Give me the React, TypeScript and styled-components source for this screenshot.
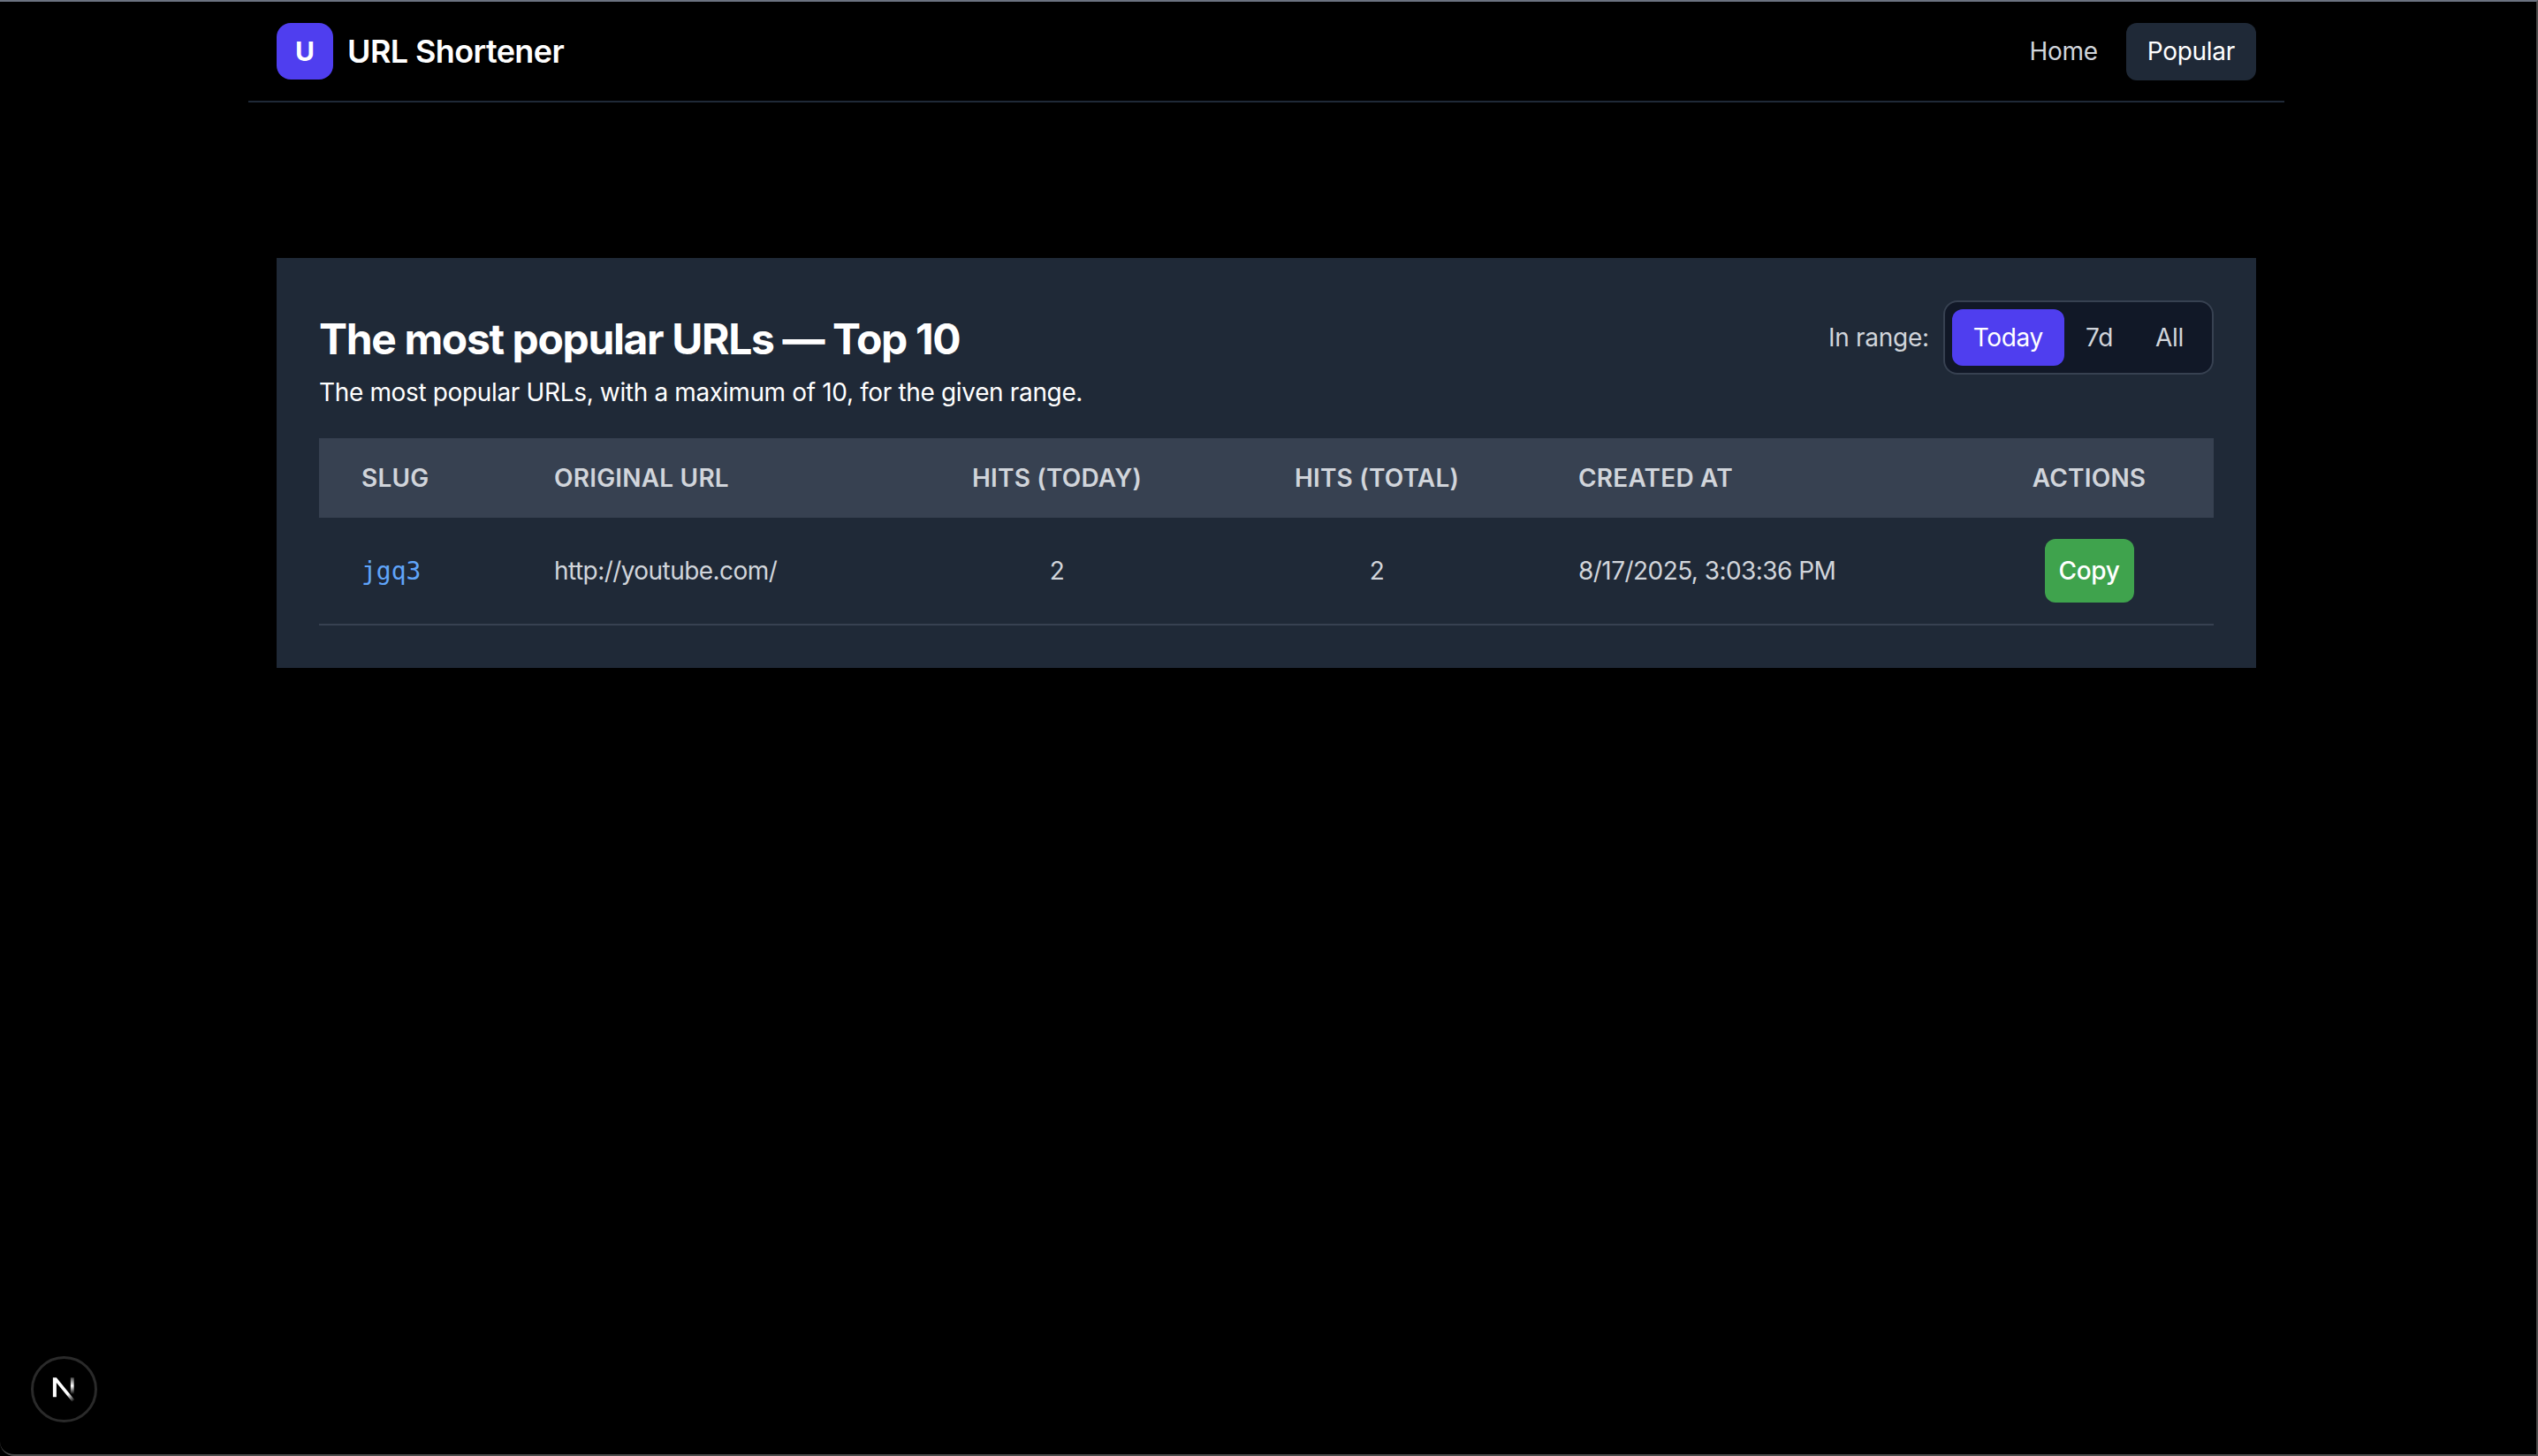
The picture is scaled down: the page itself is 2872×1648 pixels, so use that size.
import styled, { createGlobalStyle } from 'styled-components';

const GlobalStyle = createGlobalStyle`
  html, body {
    margin: 0;
    background: #000;
    color: #fff;
    font-family: Inter, "Noto Sans", sans-serif;
  }
  * {
    box-sizing: border-box;
  }
`;

const COLUMNS = [
  { label: 'Slug', width: 218, center: false },
  { label: 'Original URL', width: 435, center: false },
  { label: 'Hits (Today)', width: 364, center: true },
  { label: 'Hits (Total)', width: 360, center: true },
  { label: 'Created At', width: 485, center: false },
  { label: 'Actions', width: 282, center: true },
];

function NextMark() {
  return (
    <svg width="40" height="40" viewBox="1 0 32 32" fill="none">
      <defs>
        <linearGradient id="diag" x1="6" y1="4" x2="25" y2="27" gradientUnits="userSpaceOnUse">
          <stop offset="0.72" stopColor="#fff" />
          <stop offset="1" stopColor="#fff" stopOpacity="0" />
        </linearGradient>
        <linearGradient id="stem" x1="23" y1="5" x2="23" y2="20" gradientUnits="userSpaceOnUse">
          <stop offset="0" stopColor="#fff" stopOpacity="0.3" />
          <stop offset="0.5" stopColor="#fff" />
          <stop offset="1" stopColor="#fff" stopOpacity="0" />
        </linearGradient>
      </defs>
      <path d="M6.500 5h3.200L26 25l-2.200 1.700L9.700 9.500V22.500H6.500z" fill="url(#diag)" />
      <rect x="22.500" y="5" width="3" height="15" fill="url(#stem)" />
    </svg>
  );
}

export default function App() {
  return (
    <Page>
      <GlobalStyle />
      <Nav>
        <Brand>
          <Logo>U</Logo>
          <BrandName>URL Shortener</BrandName>
        </Brand>
        <NavLinks>
          <NavLink>Home</NavLink>
          <NavLink $active>Popular</NavLink>
        </NavLinks>
      </Nav>
      <Main>
        <Panel>
          <PanelHead>
            <Heading>
              <Title>The most popular URLs — Top 10</Title>
              <Subtitle>The most popular URLs, with a maximum of 10, for the given range.</Subtitle>
            </Heading>
            <RangePicker>
              <RangeLabel>In range:</RangeLabel>
              <Segments>
                <Segment $active>Today</Segment>
                <Segment>7d</Segment>
                <Segment>All</Segment>
              </Segments>
            </RangePicker>
          </PanelHead>
          <Table>
            <colgroup>
              {COLUMNS.map((c) => (
                <col key={c.label} width={c.width} />
              ))}
            </colgroup>
            <thead>
              <tr>
                {COLUMNS.map((c) => (
                  <Th key={c.label} $center={c.center}>
                    {c.label}
                  </Th>
                ))}
              </tr>
            </thead>
            <tbody>
              <Row>
                <Td>
                  <Slug>jgq3</Slug>
                </Td>
                <Td>http://youtube.com/</Td>
                <Td $center>2</Td>
                <Td $center>2</Td>
                <Td>8/17/2025, 3:03:36 PM</Td>
                <Td $center>
                  <CopyButton>Copy</CopyButton>
                </Td>
              </Row>
            </tbody>
          </Table>
        </Panel>
      </Main>
      <DevBadge>
        <NextMark />
      </DevBadge>
    </Page>
  );
}

const Page = styled.div`
  position: relative;
  height: 1648px;
  width: 2872px;
  padding-right: 4px;
  border-top: 2px solid #6b7280;
  border-right: 2px solid #4b4b4b;
  border-bottom: 2px solid #4b4b4b;
  border-bottom-left-radius: 16px;
  overflow: hidden;
  background: #000;
`;

const Nav = styled.header`
  display: flex;
  align-items: center;
  justify-content: space-between;
  width: 2304px;
  height: 114px;
  margin: 0 auto;
  padding: 0 32px;
  border-bottom: 2px solid #1f2937;
`;

const Brand = styled.div`
  display: flex;
  align-items: center;
  gap: 16px;
`;

const Logo = styled.div`
  display: flex;
  align-items: center;
  justify-content: center;
  width: 64px;
  height: 64px;
  border-radius: 16px;
  background: #4f3eef;
  font-size: 30px;
  font-weight: 700;
`;

const BrandName = styled.span`
  font-size: 36px;
  font-weight: 600;
  letter-spacing: -0.6px;
`;

const NavLinks = styled.nav`
  display: flex;
  gap: 8px;
`;

const NavLink = styled.a<{ $active?: boolean }>`
  display: flex;
  align-items: center;
  height: 65px;
  padding: 0 24px;
  border-radius: 12px;
  background: ${(p) => (p.$active ? '#1f2937' : 'transparent')};
  color: ${(p) => (p.$active ? '#fff' : '#d1d5db')};
  font-size: 28px;
  font-weight: 400;
  letter-spacing: -0.3px;
`;

const Main = styled.main`
  width: 2304px;
  margin: 176px auto 0;
  padding: 0 32px;
`;

const Panel = styled.section`
  padding: 48px;
  background: #1f2937;
`;

const PanelHead = styled.div`
  display: flex;
  align-items: flex-start;
  justify-content: space-between;
  margin-bottom: 32px;
`;

const Heading = styled.div`
  padding-top: 12px;
`;

const Title = styled.h1`
  margin: 0;
  font-size: 48px;
  line-height: 64px;
  font-weight: 700;
  letter-spacing: -1.37px;
`;

const Subtitle = styled.p`
  margin: 8px 0 0;
  font-size: 28px;
  line-height: 40px;
  letter-spacing: -0.35px;
`;

const RangePicker = styled.div`
  display: flex;
  align-items: center;
  gap: 16px;
`;

const RangeLabel = styled.span`
  color: #d1d5db;
  font-size: 28px;
  letter-spacing: -0.3px;
`;

const Segments = styled.div`
  display: flex;
  padding: 8px;
  border: 2px solid #374151;
  border-radius: 16px;
  background: #111827;
`;

const Segment = styled.button<{ $active?: boolean }>`
  height: 64px;
  padding: 0 24px;
  border: 0;
  border-radius: 12px;
  background: ${(p) => (p.$active ? '#4f3eef' : 'transparent')};
  color: ${(p) => (p.$active ? '#fff' : '#d1d5db')};
  font-family: inherit;
  font-size: 28px;
  font-weight: 400;
  letter-spacing: -0.3px;
`;

const Table = styled.table`
  width: 2144px;
  table-layout: fixed;
  border-collapse: collapse;
`;

const Th = styled.th<{ $center?: boolean }>`
  height: 90px;
  padding: 0 48px;
  background: #374151;
  color: #d1d5db;
  font-size: 28px;
  font-weight: 600;
  letter-spacing: 0.2px;
  text-align: ${(p) => (p.$center ? 'center' : 'left')};
  text-transform: uppercase;
`;

const Row = styled.tr`
  border-bottom: 2px solid #374151;
`;

const Td = styled.td<{ $center?: boolean }>`
  height: 121px;
  padding: 0 48px;
  color: #d1d5db;
  font-size: 28px;
  letter-spacing: -0.55px;
  text-align: ${(p) => (p.$center ? 'center' : 'left')};
`;

const Slug = styled.a`
  color: #60a5fa;
  font-family: "DejaVu Sans Mono", monospace;
  font-size: 28px;
  letter-spacing: 0;
`;

const CopyButton = styled.button`
  height: 72px;
  width: 101px;
  padding: 0;
  border: 0;
  border-radius: 12px;
  background: #3fa34d;
  color: #fff;
  font-family: inherit;
  font-size: 28px;
  font-weight: 500;
  letter-spacing: -0.3px;
`;

const DevBadge = styled.div`
  position: absolute;
  left: 35px;
  bottom: 36px;
  display: flex;
  align-items: center;
  justify-content: center;
  width: 75px;
  height: 75px;
  border: 3px solid #2a2a2a;
  border-radius: 50%;
  background: #000;
`;
